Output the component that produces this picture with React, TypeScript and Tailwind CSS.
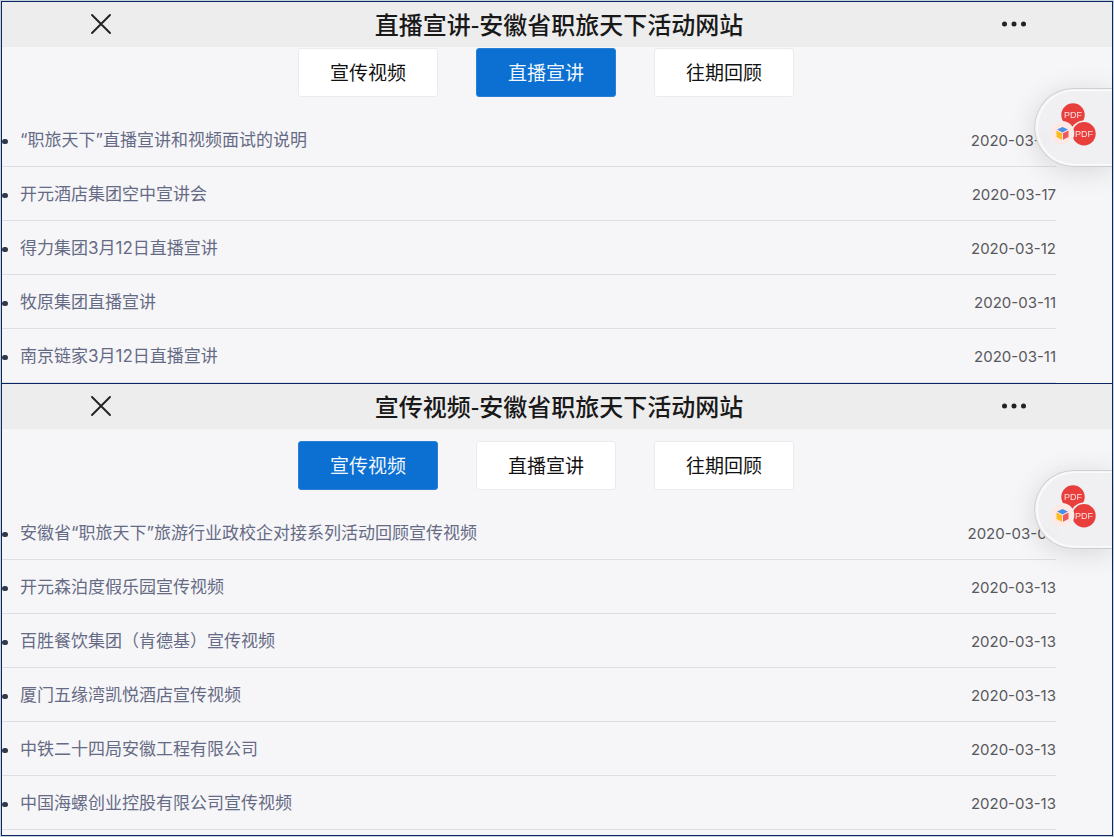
import React from "react";

type Entry = { title: string; date: string };
type PanelProps = { name: string; active: string; entries: Entry[]; className: string; tabsClassName: string };

const tabs = ["宣传视频", "直播宣讲", "往期回顾"];

const liveEntries: Entry[] = [
  { title: "“职旅天下”直播宣讲和视频面试的说明", date: "2020-03-18" },
  { title: "开元酒店集团空中宣讲会", date: "2020-03-17" },
  { title: "得力集团3月12日直播宣讲", date: "2020-03-12" },
  { title: "牧原集团直播宣讲", date: "2020-03-11" },
  { title: "南京链家3月12日直播宣讲", date: "2020-03-11" },
];

const videoEntries: Entry[] = [
  { title: "安徽省“职旅天下”旅游行业政校企对接系列活动回顾宣传视频", date: "2020-03-09" },
  { title: "开元森泊度假乐园宣传视频", date: "2020-03-13" },
  { title: "百胜餐饮集团（肯德基）宣传视频", date: "2020-03-13" },
  { title: "厦门五缘湾凯悦酒店宣传视频", date: "2020-03-13" },
  { title: "中铁二十四局安徽工程有限公司", date: "2020-03-13" },
  { title: "中国海螺创业控股有限公司宣传视频", date: "2020-03-13" },
];

function FloatingFiles() {
  return (
    <button
      type="button"
      aria-label="PDF"
      className="absolute right-0 top-[86px] h-[79px] w-[78px] rounded-l-full border border-r-0 border-[#cfcfd2] bg-[#f0f0f2]/90 shadow-[0_4px_28px_rgba(0,0,0,0.13)] backdrop-blur-sm"
    >
      <svg viewBox="0 0 77 77" className="h-[77px] w-[77px]" aria-hidden="true">
        <path d="M77 1.2H39.5A37.3 37.3 0 0 0 39.5 75.8H77" fill="none" stroke="#fafafb" strokeWidth="1.6" />
        <circle cx="38" cy="26" r="11.7" fill="#e83f3d" />
        <circle cx="49" cy="44.8" r="13.4" fill="#f0f0f2" />
        <circle cx="49" cy="44.8" r="11.7" fill="#e83f3d" />
        <circle cx="27" cy="44.2" r="12.3" fill="#f0f0f2" />
        <circle cx="27" cy="44.2" r="11" fill="#fde8e3" />
        <path d="M27.5 38 33 40.5 27.5 43.4 22 40.5Z" fill="#4a8ee6" />
        <path d="M21.5 41.4 27 44.2V50.8L21.5 47.9Z" fill="#fbbc1f" />
        <path d="M33.5 41.4 28 44.2V50.8L33.5 47.9Z" fill="#f0585f" />
        <text x="38" y="29.4" textAnchor="middle" fontSize="9" fill="#fde3e2" className="font-['Liberation_Sans',sans-serif]">PDF</text>
        <text x="49" y="48" textAnchor="middle" fontSize="9" fill="#fde3e2" className="font-['Liberation_Sans',sans-serif]">PDF</text>
      </svg>
    </button>
  );
}

function Panel({ name, active, entries, className, tabsClassName }: PanelProps) {
  return (
    <section className={`relative border-x border-t border-[#0a2763] bg-[#f6f6f8] ${className}`}>
      <header className="flex h-[45px] items-center justify-between border-b border-[#ebebeb] bg-[#ededed] pl-[88px] pr-[84px]">
        <button type="button" aria-label="关闭" className="w-7">
          <svg viewBox="0 0 22 22" className="h-[22px] w-[22px]" fill="none" stroke="#222" strokeWidth="1.9" strokeLinecap="round" aria-hidden="true">
            <path d="M2 2 20 20M20 2 2 20" />
          </svg>
        </button>
        <h2 className="font-['Noto_Sans_CJK_SC',sans-serif] text-2xl font-medium text-[#191919]">{name}-安徽省职旅天下活动网站</h2>
        <button type="button" aria-label="更多" className="w-7">
          <svg viewBox="0 0 28 8" className="h-2 w-7" fill="#222" aria-hidden="true">
            <circle cx="4.5" cy="4" r="2.5" />
            <circle cx="14" cy="4" r="2.5" />
            <circle cx="23.5" cy="4" r="2.5" />
          </svg>
        </button>
      </header>
      <nav className={`flex justify-center gap-[38px] pb-4 pr-[22px] ${tabsClassName}`}>
        {tabs.map((tab) => (
          <button
            key={tab}
            type="button"
            className={`h-[49px] w-[140px] rounded-[3px] border pt-1 text-[19px] ${
              tab === active ? "border-[#2b80d6] bg-[#0b70d1] text-[#f0f6fc]" : "border-[#ebebee] bg-white text-[#111]"
            }`}
          >
            {tab}
          </button>
        ))}
      </nav>
      <ul className="mr-14">
        {entries.map((entry) => (
          <li key={entry.title} className="flex h-[54px] items-center border-b border-[#dedee4] pt-[3px]">
            <span className="mr-3 h-[5px] w-[6px] shrink-0 rounded-full bg-[#33394c]" />
            <a href="#" className="grow text-[17px] text-[#666b85]">{entry.title}</a>
            <time className="text-[15px] text-[#58585c]">{entry.date}</time>
          </li>
        ))}
      </ul>
      <FloatingFiles />
    </section>
  );
}

export default function App() {
  return (
    <main className="bg-[#c6d2d9] p-px font-['Inter','Noto_Sans_CJK_SC',sans-serif]">
      <Panel name="直播宣讲" active="直播宣讲" entries={liveEntries} className="" tabsClassName="pt-px" />
      <Panel name="宣传视频" active="宣传视频" entries={videoEntries} className="border-b pb-[5px]" tabsClassName="pt-3" />
    </main>
  );
}
